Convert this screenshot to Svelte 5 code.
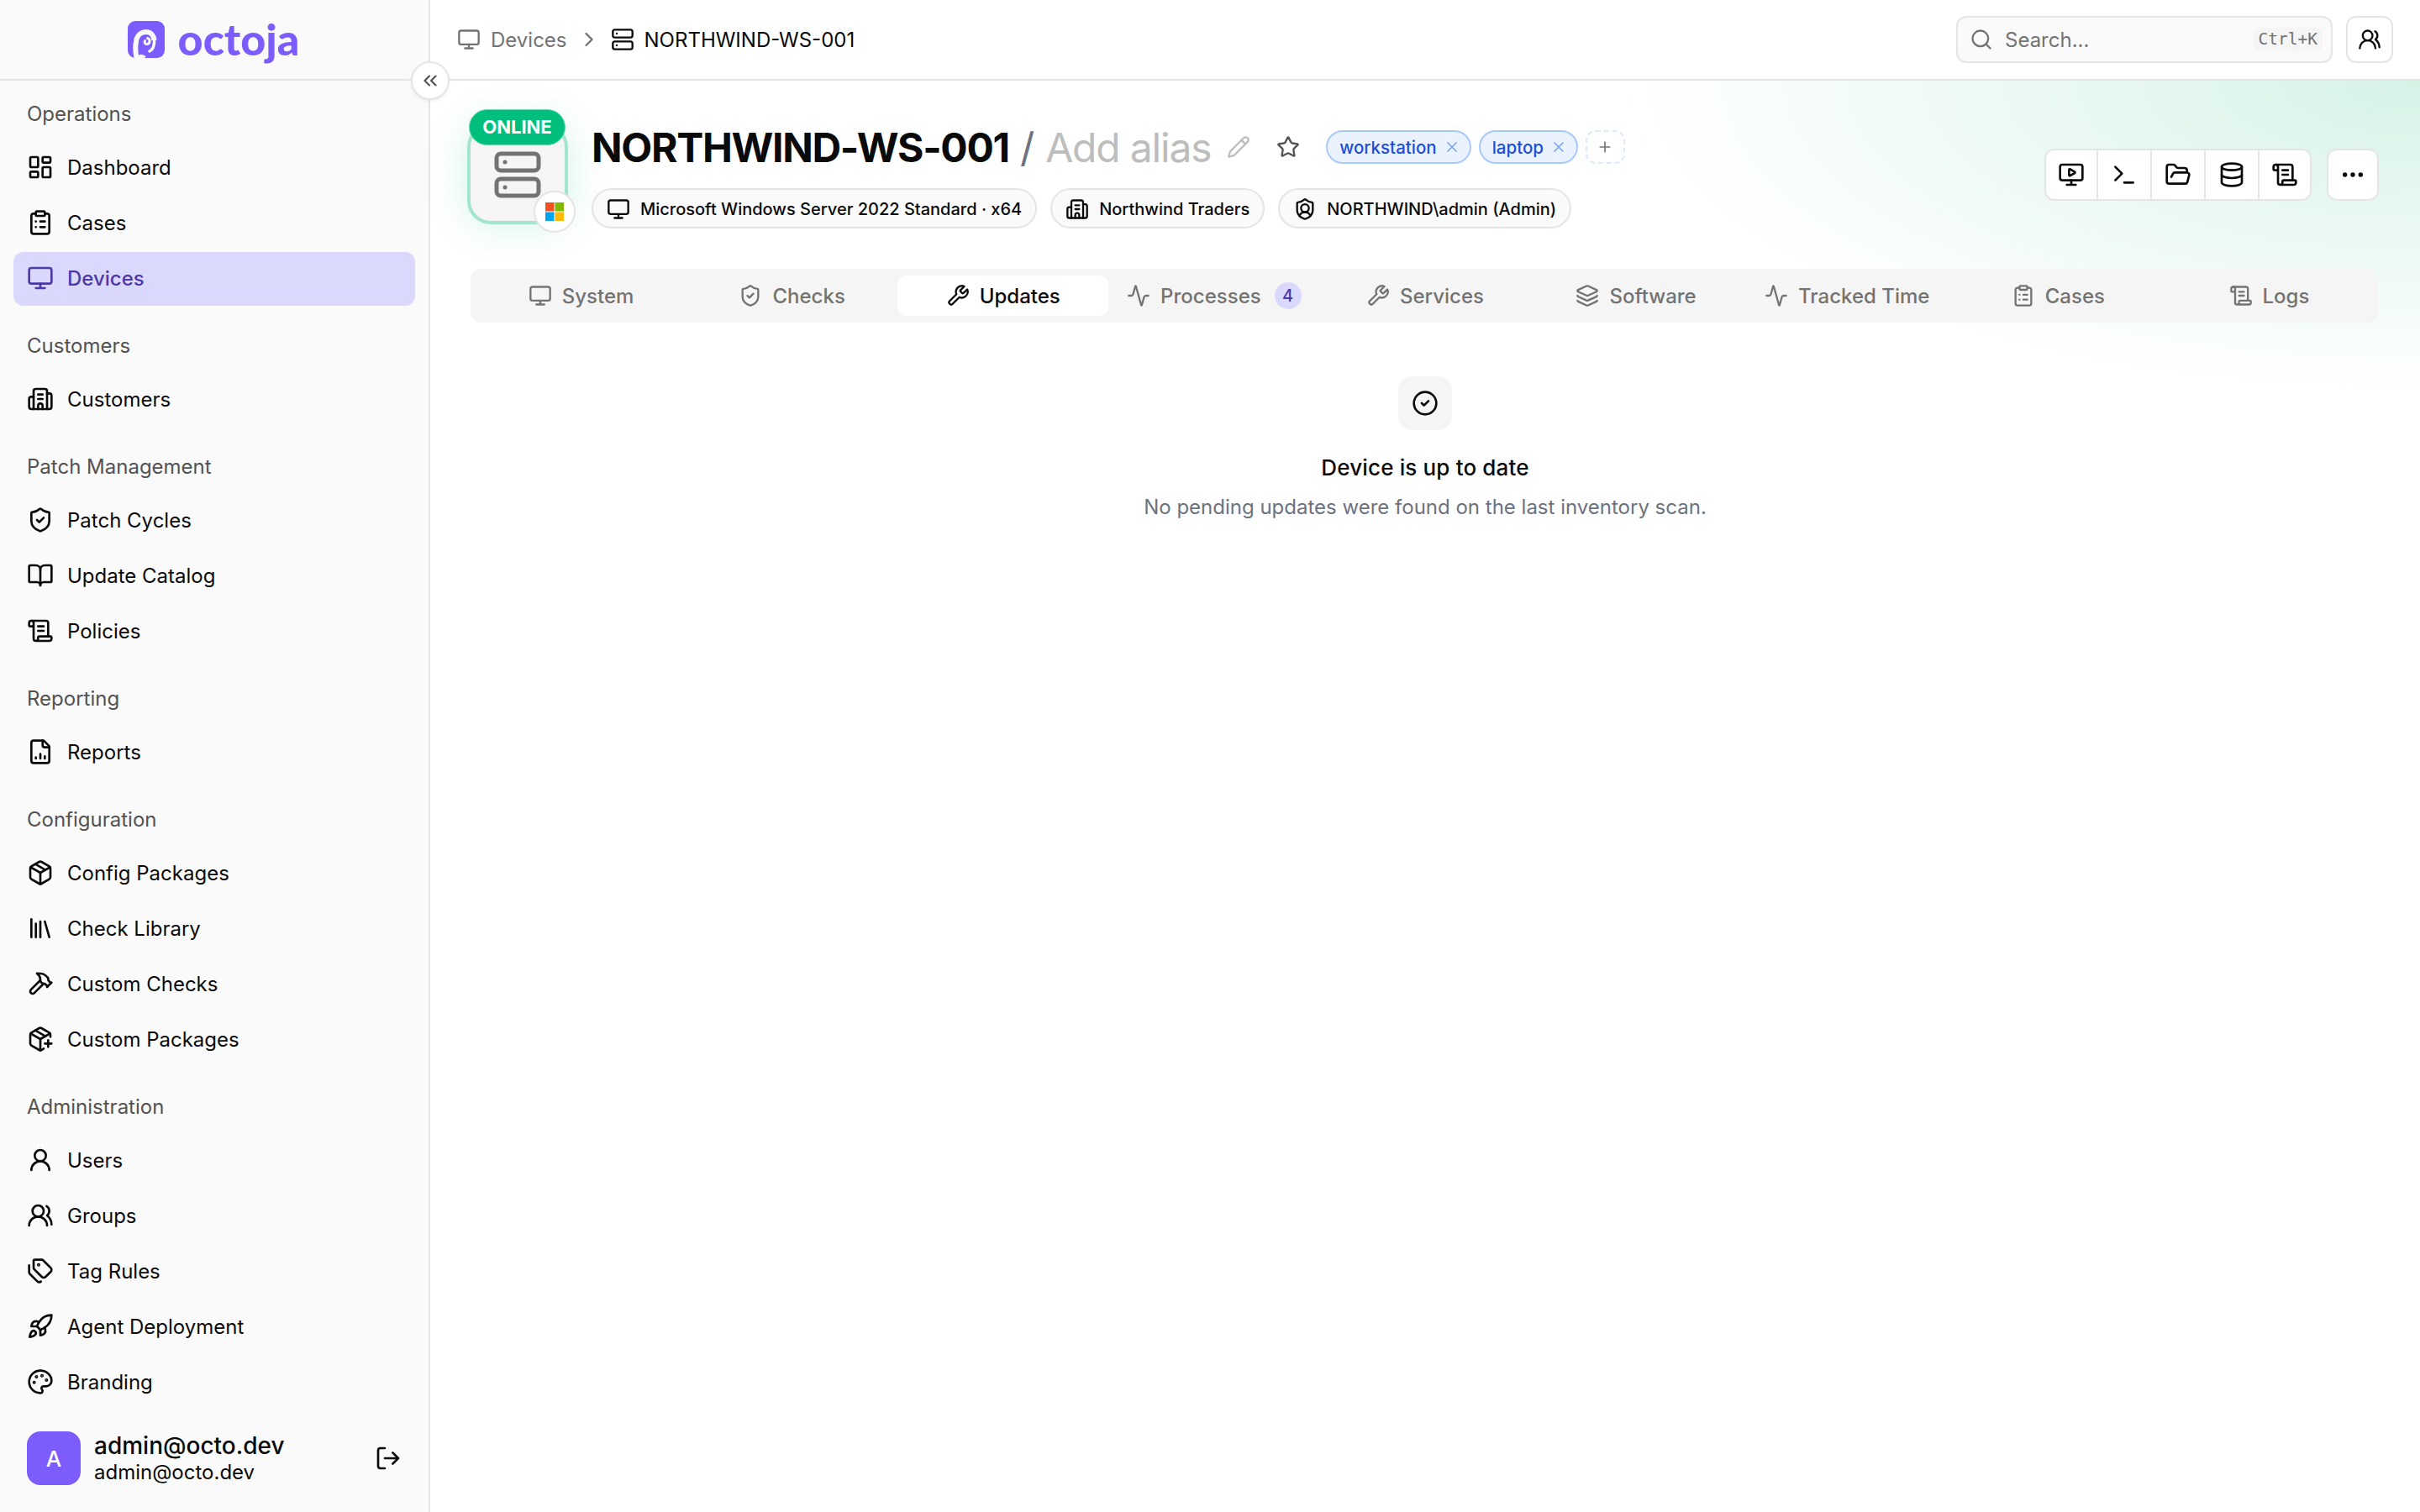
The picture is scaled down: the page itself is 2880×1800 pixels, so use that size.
<script>
  const icons = {
    dashboard: '<rect x="3" y="3" width="7" height="9" rx="1"/><rect x="14" y="3" width="7" height="5" rx="1"/><rect x="14" y="12" width="7" height="9" rx="1"/><rect x="3" y="16" width="7" height="5" rx="1"/>',
    clipboard: '<rect x="8" y="2" width="8" height="4" rx="1"/><path d="M16 4h2a2 2 0 0 1 2 2v14a2 2 0 0 1-2 2H6a2 2 0 0 1-2-2V6a2 2 0 0 1 2-2h2"/><path d="M12 11h4M12 16h4M8 11h.01M8 16h.01"/>',
    monitor: '<rect x="2" y="3" width="20" height="14" rx="2"/><path d="M8 21h8M12 17v4"/>',
    building: '<path d="M10 12h4M10 8h4M14 21v-3a2 2 0 0 0-4 0v3"/><path d="M6 10H4a2 2 0 0 0-2 2v7a2 2 0 0 0 2 2h16a2 2 0 0 0 2-2V9a2 2 0 0 0-2-2h-2"/><path d="M6 21V5a2 2 0 0 1 2-2h8a2 2 0 0 1 2 2v16"/>',
    shieldCheck: '<path d="M20 13c0 5-3.5 7.5-7.66 8.95a1 1 0 0 1-.67-.01C7.5 20.5 4 18 4 13V6a1 1 0 0 1 1-1c2 0 4.5-1.2 6.24-2.72a1.17 1.17 0 0 1 1.52 0C14.51 3.81 17 5 19 5a1 1 0 0 1 1 1z"/><path d="m9 12 2 2 4-4"/>',
    book: '<path d="M12 7v14"/><path d="M3 18a1 1 0 0 1-1-1V4a1 1 0 0 1 1-1h5a4 4 0 0 1 4 4 4 4 0 0 1 4-4h5a1 1 0 0 1 1 1v13a1 1 0 0 1-1 1h-6a3 3 0 0 0-3 3 3 3 0 0 0-3-3z"/>',
    scroll: '<path d="M15 12h-5M15 8h-5"/><path d="M19 17V5a2 2 0 0 0-2-2H4"/><path d="M8 21h12a2 2 0 0 0 2-2v-1a1 1 0 0 0-1-1H11a1 1 0 0 0-1 1v1a2 2 0 1 1-4 0V5a2 2 0 1 0-4 0v2a1 1 0 0 0 1 1h3"/>',
    fileChart: '<path d="M15 2H6a2 2 0 0 0-2 2v16a2 2 0 0 0 2 2h12a2 2 0 0 0 2-2V7Z"/><path d="M14 2v4a2 2 0 0 0 2 2h4"/><path d="M8 18v-1M12 18v-4M16 18v-2"/>',
    package: '<path d="M11 21.73a2 2 0 0 0 2 0l7-4A2 2 0 0 0 21 16V8a2 2 0 0 0-1-1.73l-7-4a2 2 0 0 0-2 0l-7 4A2 2 0 0 0 3 8v8a2 2 0 0 0 1 1.73z"/><path d="M12 22V12"/><path d="M3.29 7 12 12l8.71-5"/><path d="m7.5 4.27 9 5.15"/>',
    library: '<path d="m16 6 4 14M12 6v14M8 8v12M4 4v16"/>',
    hammer: '<path d="m15 12-8.373 8.373a1 1 0 1 1-3-3L12 9"/><path d="m18 15 4-4"/><path d="m21.5 11.5-1.914-1.914A2 2 0 0 1 19 8.172V7l-2.26-2.26a6 6 0 0 0-4.202-1.756L9 2.96l.92.82A6.18 6.18 0 0 1 12 8.4V10l2 2h1.172a2 2 0 0 1 1.414.586L18.5 14.5"/>',
    packagePlus: '<path d="M16 16h6M19 13v6"/><path d="M21 10V8a2 2 0 0 0-1-1.73l-7-4a2 2 0 0 0-2 0l-7 4A2 2 0 0 0 3 8v8a2 2 0 0 0 1 1.73l7 4a2 2 0 0 0 2 0l2-1.14"/><path d="m7.5 4.27 9 5.15"/><path d="M3.29 7 12 12l8.71-5"/><path d="M12 22V12"/>',
    user: '<circle cx="12" cy="8" r="5"/><path d="M20 21a8 8 0 0 0-16 0"/>',
    users: '<path d="M18 21a8 8 0 0 0-16 0"/><circle cx="10" cy="8" r="5"/><path d="M22 20c0-3.37-2-6.5-4-8a5 5 0 0 0-.45-8.3"/>',
    tags: '<path d="M13.172 2a2 2 0 0 1 1.414.586l6.71 6.71a2.4 2.4 0 0 1 0 3.408l-4.592 4.592a2.4 2.4 0 0 1-3.408 0l-6.71-6.71A2 2 0 0 1 6 9.172V3a1 1 0 0 1 1-1z"/><path d="M2 7v6.172a2 2 0 0 0 .586 1.414l6.71 6.71a2.4 2.4 0 0 0 3.191.193"/><circle cx="10.5" cy="6.5" r=".5" fill="currentColor"/>',
    rocket: '<path d="M4.5 16.5c-1.5 1.26-2 5-2 5s3.74-.5 5-2c.71-.84.7-2.13-.09-2.91a2.18 2.18 0 0 0-2.91-.09z"/><path d="m12 15-3-3a22 22 0 0 1 2-3.95A12.88 12.88 0 0 1 22 2c0 2.72-.78 7.5-6 11a22.35 22.35 0 0 1-4 2z"/><path d="M9 12H4s.55-3.03 2-4c1.62-1.08 5 0 5 0"/><path d="M12 15v5s3.03-.55 4-2c1.08-1.62 0-5 0-5"/>',
    palette: '<path d="M12 22a1 1 0 0 1 0-20 10 9 0 0 1 10 9 5 5 0 0 1-5 5h-2.25a1.75 1.75 0 0 0-1.4 2.8l.3.4a1.75 1.75 0 0 1-1.4 2.8z"/><circle cx="13.5" cy="6.5" r=".5" fill="currentColor"/><circle cx="17.5" cy="10.5" r=".5" fill="currentColor"/><circle cx="6.5" cy="12.5" r=".5" fill="currentColor"/><circle cx="8.5" cy="7.5" r=".5" fill="currentColor"/>',
    logout: '<path d="m16 17 5-5-5-5M21 12H9"/><path d="M9 21H5a2 2 0 0 1-2-2V5a2 2 0 0 1 2-2h4"/>',
    chevronsLeft: '<path d="m11 17-5-5 5-5M18 17l-5-5 5-5"/>',
    chevronRight: '<path d="m9 18 6-6-6-6"/>',
    server: '<rect x="2" y="2" width="20" height="8" rx="2"/><rect x="2" y="14" width="20" height="8" rx="2"/><path d="M6 6h.01M6 18h.01"/>',
    search: '<path d="m21 21-4.34-4.34"/><circle cx="11" cy="11" r="8"/>',
    pencil: '<path d="M21.174 6.812a1 1 0 0 0-3.986-3.987L3.842 16.174a2 2 0 0 0-.5.83l-1.321 4.352a.5.5 0 0 0 .623.622l4.353-1.32a2 2 0 0 0 .83-.497z"/><path d="m15 5 4 4"/>',
    star: '<path d="M11.525 2.295a.53.53 0 0 1 .95 0l2.31 4.679a2.123 2.123 0 0 0 1.595 1.16l5.166.756a.53.53 0 0 1 .294.904l-3.736 3.638a2.123 2.123 0 0 0-.611 1.878l.882 5.14a.53.53 0 0 1-.771.56l-4.618-2.428a2.122 2.122 0 0 0-1.973 0L6.396 21.01a.53.53 0 0 1-.77-.56l.881-5.139a2.122 2.122 0 0 0-.611-1.879L2.16 9.795a.53.53 0 0 1 .294-.906l5.165-.755a2.122 2.122 0 0 0 1.597-1.16z"/>',
    x: '<path d="M18 6 6 18M6 6l12 12"/>',
    plus: '<path d="M5 12h14M12 5v14"/>',
    shieldUser: '<path d="M20 13c0 5-3.5 7.5-7.66 8.95a1 1 0 0 1-.67-.01C7.5 20.5 4 18 4 13V6a1 1 0 0 1 1-1c2 0 4.5-1.2 6.24-2.72a1.17 1.17 0 0 1 1.52 0C14.51 3.81 17 5 19 5a1 1 0 0 1 1 1z"/><path d="M6.376 18.91a6 6 0 0 1 11.249.003"/><circle cx="12" cy="11" r="4"/>',
    monitorPlay: '<path d="M15.033 9.44a.647.647 0 0 1 0 1.12l-4.065 2.352a.645.645 0 0 1-.968-.56V7.648a.645.645 0 0 1 .967-.56z"/><path d="M12 17v4M8 21h8"/><rect x="2" y="3" width="20" height="14" rx="2"/>',
    terminal: '<path d="M12 19h8M4 17l6-6-6-6"/>',
    folder: '<path d="m6 14 1.5-2.9A2 2 0 0 1 9.24 10H20a2 2 0 0 1 1.94 2.5l-1.54 6a2 2 0 0 1-1.95 1.5H4a2 2 0 0 1-2-2V5a2 2 0 0 1 2-2h3.9a2 2 0 0 1 1.69.9l.81 1.2a2 2 0 0 0 1.67.9H18a2 2 0 0 1 2 2v2"/>',
    database: '<ellipse cx="12" cy="5" rx="9" ry="3"/><path d="M3 5v14a9 3 0 0 0 18 0V5"/><path d="M3 12a9 3 0 0 0 18 0"/>',
    ellipsis: '<circle cx="12" cy="12" r="1"/><circle cx="19" cy="12" r="1"/><circle cx="5" cy="12" r="1"/>',
    wrench: '<path d="M14.7 6.3a1 1 0 0 0 0 1.4l1.6 1.6a1 1 0 0 0 1.4 0l3.77-3.77a6 6 0 0 1-7.94 7.94l-6.91 6.91a2.12 2.12 0 0 1-3-3l6.91-6.91a6 6 0 0 1 7.94-7.94l-3.76 3.76z"/>',
    activity: '<path d="M22 12h-2.48a2 2 0 0 0-1.93 1.46l-2.35 8.36a.25.25 0 0 1-.48 0L9.24 2.18a.25.25 0 0 0-.48 0l-2.35 8.36A2 2 0 0 1 4.49 12H2"/>',
    layers: '<path d="M12.83 2.18a2 2 0 0 0-1.66 0L2.6 6.08a1 1 0 0 0 0 1.83l8.58 3.91a2 2 0 0 0 1.66 0l8.58-3.9a1 1 0 0 0 0-1.83z"/><path d="M2 12a1 1 0 0 0 .58.91l8.6 3.91a2 2 0 0 0 1.65 0l8.58-3.9A1 1 0 0 0 22 12"/><path d="M2 17a1 1 0 0 0 .58.91l8.6 3.91a2 2 0 0 0 1.65 0l8.58-3.9A1 1 0 0 0 22 17"/>',
    circleCheck: '<circle cx="12" cy="12" r="10"/><path d="m9 12 2 2 4-4"/>'
  }

  const sections = [
    { title: 'Operations', items: [['dashboard', 'Dashboard'], ['clipboard', 'Cases'], ['monitor', 'Devices', true]] },
    { title: 'Customers', items: [['building', 'Customers']] },
    { title: 'Patch Management', items: [['shieldCheck', 'Patch Cycles'], ['book', 'Update Catalog'], ['scroll', 'Policies']] },
    { title: 'Reporting', items: [['fileChart', 'Reports']] },
    { title: 'Configuration', items: [['package', 'Config Packages'], ['library', 'Check Library'], ['hammer', 'Custom Checks'], ['packagePlus', 'Custom Packages']] },
    { title: 'Administration', items: [['user', 'Users'], ['users', 'Groups'], ['tags', 'Tag Rules'], ['rocket', 'Agent Deployment'], ['palette', 'Branding']] }
  ]

  const tabs = [
    ['monitor', 'System'], ['shieldCheck', 'Checks'], ['wrench', 'Updates'], ['activity', 'Processes', 4], ['wrench', 'Services'],
    ['layers', 'Software'], ['activity', 'Tracked Time'], ['clipboard', 'Cases'], ['scroll', 'Logs']
  ]

  const actions = ['monitorPlay', 'terminal', 'folder', 'database', 'scroll']
  const chips = [
    ['monitor', 'Microsoft Windows Server 2022 Standard · x64'],
    ['building', 'Northwind Traders'],
    ['shieldUser', 'NORTHWIND\\admin (Admin)']
  ]
</script>

{#snippet icon(name, size = 32)}
  <svg class="icon" width={size} height={size} viewBox="0 0 24 24" fill="none" stroke="currentColor" stroke-width="2" stroke-linecap="round" stroke-linejoin="round">{@html icons[name]}</svg>
{/snippet}

<div class="app">
  <aside class="sidebar">
    <div class="brand">
      <svg class="mark" width="44" height="44" viewBox="0 0 44 44" fill="none" stroke="#fafafa" stroke-linecap="round">
        <rect width="44" height="44" rx="9" fill="#7c5cfc" stroke="none" />
        <path stroke-width="6" stroke-linecap="butt" d="M11 46C9 38 9 30 10 24C11 17 16 13 22 13C27 13 31 17 31.5 23" />
        <path stroke-width="3.5" d="M31.500 22C32 29 30 34 26 36" />
        <path stroke-width="3" d="M23.500 20.500C27 21.500 27 27 23 27.500C20.500 27.800 19.500 25 20.500 23.500" />
        <path stroke-width="5" stroke-linecap="butt" d="M12 45C14 42 17 41 20 44" />
      </svg>
      <span class="wordmark">octoja</span>
    </div>
    <nav>
      {#each sections as section}
        <div class="section">
          <div class="section-title">{section.title}</div>
          <div class="items">
            {#each section.items as [ic, label, active]}
              <div class="item" class:active>
                {@render icon(ic)}
                <span>{label}</span>
              </div>
            {/each}
          </div>
        </div>
      {/each}
    </nav>
    <div class="account">
      <div class="avatar">A</div>
      <div class="who">
        <div class="name">admin@octo.dev</div>
        <div class="mail">admin@octo.dev</div>
      </div>
      {@render icon('logout')}
    </div>
  </aside>

  <button class="collapse">{@render icon('chevronsLeft', 26)}</button>

  <div class="main">
    <header class="topbar">
      <div class="crumbs">
        <span class="crumb">{@render icon('monitor', 28)}Devices</span>
        <span class="sep">{@render icon('chevronRight', 28)}</span>
        <span class="crumb current">{@render icon('server', 28)}NORTHWIND-WS-001</span>
      </div>
      <div class="top-right">
        <div class="search">
          {@render icon('search', 28)}
          <span class="placeholder">Search...</span>
          <kbd>Ctrl+K</kbd>
        </div>
        <button class="user-btn">{@render icon('users', 28)}</button>
      </div>
    </header>

    <main class="content">
      <div class="head">
        <div class="device">
          <div class="device-box">{@render icon('server', 60)}</div>
          <div class="status">ONLINE</div>
          <div class="os">
            <svg width="22" height="22" viewBox="0 0 22 22">
              <rect width="10.500" height="10.500" fill="#f25022" />
              <rect x="11.500" width="10.500" height="10.500" fill="#7fba00" />
              <rect y="11.500" width="10.500" height="10.500" fill="#00a4ef" />
              <rect x="11.500" y="11.500" width="10.500" height="10.500" fill="#ffb900" />
            </svg>
          </div>
        </div>
        <div class="info">
          <div class="title-row">
            <h1>NORTHWIND-WS-001</h1>
            <span class="slash">/</span>
            <span class="alias">Add alias</span>
            <span class="pencil">{@render icon('pencil', 28)}</span>
            <span class="star">{@render icon('star', 28)}</span>
            <div class="tags">
              <span class="tag">workstation {@render icon('x', 20)}</span>
              <span class="tag">laptop {@render icon('x', 20)}</span>
              <span class="tag-add">{@render icon('plus', 20)}</span>
            </div>
          </div>
          <div class="chips">
            {#each chips as [ic, label]}
              <span class="chip">{@render icon(ic, 28)}{label}</span>
            {/each}
          </div>
        </div>
        <div class="actions">
          <div class="action-group">
            {#each actions as ic}
              <button>{@render icon(ic, 32)}</button>
            {/each}
          </div>
          <button class="more">{@render icon('ellipsis', 32)}</button>
        </div>
      </div>

      <div class="tabs">
        {#each tabs as [ic, label, count], i}
          <div class="tab" class:selected={i === 2}>
            {@render icon(ic, 28)}
            <span>{label}</span>
            {#if count}<span class="count">{count}</span>{/if}
          </div>
        {/each}
      </div>

      <div class="empty">
        <div class="empty-icon">{@render icon('circleCheck', 32)}</div>
        <div class="empty-title">Device is up to date</div>
        <div class="empty-text">No pending updates were found on the last inventory scan.</div>
      </div>
    </main>
  </div>
</div>

<style>
  :global(body) {
    margin: 0;
    background: #fff;
    font-family: Inter, 'Liberation Sans', sans-serif;
    color: #0a0a0a;
  }

  .app {
    position: relative;
    display: flex;
    width: 2880px;
    height: 1800px;
    overflow: hidden;
  }

  .icon {
    flex: none;
    display: block;
  }

  button {
    appearance: none;
    font: inherit;
    color: inherit;
    padding: 0;
    display: flex;
    align-items: center;
    justify-content: center;
    cursor: pointer;
  }

  .sidebar {
    flex: 0 0 512px;
    box-sizing: border-box;
    display: flex;
    flex-direction: column;
    background: #fafafa;
    border-right: 2px solid #e5e5e5;
  }

  .brand {
    height: 96px;
    box-sizing: border-box;
    border-bottom: 2px solid #e5e5e5;
    display: flex;
    align-items: center;
    justify-content: center;
    gap: 16px;
    padding-right: 2px;
  }

  .wordmark {
    font-family: Lato, sans-serif;
    font-weight: 900;
    font-size: 52px;
    line-height: 1;
    color: #7c5cfc;
    margin-top: -3px;
  }

  nav {
    flex: 1;
    padding: 24px 16px 0;
    display: flex;
    flex-direction: column;
    gap: 32px;
  }

  .section-title {
    height: 32px;
    line-height: 32px;
    margin: 0 16px 16px;
    font-size: 24px;
    color: #525252;
  }

  .items {
    display: flex;
    flex-direction: column;
    gap: 2px;
  }

  .item {
    height: 64px;
    box-sizing: border-box;
    display: flex;
    align-items: center;
    gap: 16px;
    padding: 0 16px 2px;
    border-radius: 12px;
    font-size: 24px;
  }

  .item.active {
    background: #dad9fd;
    color: #4c3aa8;
    font-weight: 500;
  }

  .account {
    height: 64px;
    margin: 0 0 32px;
    padding: 0 32px;
    display: flex;
    align-items: center;
    gap: 16px;
  }

  .avatar {
    width: 64px;
    height: 64px;
    border-radius: 16px;
    background: #7c5cfc;
    color: #fff;
    font-size: 26px;
    font-weight: 500;
    display: flex;
    align-items: center;
    justify-content: center;
  }

  .who {
    flex: 1;
  }

  .name {
    font-size: 28px;
    line-height: 34px;
    font-weight: 500;
  }

  .mail {
    font-size: 24px;
    line-height: 30px;
  }

  .collapse {
    position: absolute;
    left: 489px;
    top: 73px;
    width: 46px;
    height: 46px;
    border-radius: 50%;
    background: #fff;
    border: 2px solid #e5e5e5;
    color: #525252;
    box-shadow: 0 2px 4px rgba(0, 0, 0, 0.06);
  }

  .main {
    flex: 1;
    min-width: 0;
    display: flex;
    flex-direction: column;
  }

  .topbar {
    height: 96px;
    box-sizing: border-box;
    border-bottom: 2px solid #e5e5e5;
    display: flex;
    align-items: center;
    justify-content: space-between;
    padding: 0 32px;
  }

  .crumbs {
    display: flex;
    align-items: center;
    gap: 12px;
    font-size: 24px;
  }

  .crumb {
    display: flex;
    align-items: center;
    gap: 12px;
    color: #737373;
  }

  .crumb.current {
    color: #0a0a0a;
  }

  .sep {
    color: #737373;
  }

  .top-right {
    display: flex;
    gap: 16px;
  }

  .search {
    width: 448px;
    height: 56px;
    box-sizing: border-box;
    display: flex;
    align-items: center;
    gap: 14px;
    padding: 0 10px 0 14px;
    background: #fafafa;
    border: 2px solid #e5e5e5;
    border-radius: 12px;
    color: #737373;
  }

  .placeholder {
    flex: 1;
    font-size: 24px;
  }

  kbd {
    height: 28px;
    line-height: 28px;
    padding: 0 6px;
    background: #f5f5f5;
    border-radius: 6px;
    font-family: 'DejaVu Sans Mono', monospace;
    font-size: 19.5px;
  }

  .user-btn {
    width: 56px;
    height: 56px;
    background: #fff;
    border: 2px solid #e5e5e5;
    border-radius: 12px;
  }

  .content {
    flex: 1;
    padding: 0 50px 0 48px;
    background: radial-gradient(ellipse 960px 380px at 100% 0, #d6f2e7, rgba(214, 242, 231, 0) 100%) no-repeat;
  }

  .head {
    display: flex;
    align-items: center;
    height: 224px;
  }

  .device {
    position: relative;
    flex: none;
    width: 120px;
    height: 120px;
    margin: -2px 28px 0 -4px;
  }

  .device-box {
    box-sizing: border-box;
    width: 120px;
    height: 120px;
    background: #f5f5f5;
    border: 4px solid #a3e6cb;
    border-radius: 28px;
    color: #737373;
    display: flex;
    align-items: center;
    justify-content: center;
    box-shadow: 0 0 48px rgba(0, 191, 125, 0.18);
    padding-top: 2px;
  }

  .status {
    position: absolute;
    top: -17px;
    left: 2px;
    width: 115px;
    height: 43px;
    box-sizing: border-box;
    background: #00bf7d;
    border: 1px solid #6fd8b0;
    border-radius: 22px;
    color: #fff;
    font-size: 22px;
    font-weight: 700;
    line-height: 41px;
    text-align: center;
  }

  .os {
    position: absolute;
    right: -9px;
    bottom: -10px;
    box-sizing: border-box;
    width: 50px;
    height: 50px;
    border-radius: 50%;
    background: #fff;
    border: 2px solid #e5e5e5;
    display: flex;
    align-items: center;
    justify-content: center;
  }

  .info {
    flex: 1;
    display: flex;
    flex-direction: column;
    gap: 18px;
  }

  .title-row {
    display: flex;
    align-items: center;
    height: 62px;
  }

  h1 {
    margin: 0;
    font-size: 48px;
    font-weight: 700;
    letter-spacing: -1.3px;
  }

  .slash {
    margin: 0 13px;
    font-size: 48px;
    color: #6b7280;
  }

  .alias {
    font-size: 48px;
    letter-spacing: -1.2px;
    color: #bdbdbd;
  }

  .pencil {
    margin-left: 19px;
    color: #bdbdbd;
  }

  .star {
    margin-left: 31px;
    color: #525252;
  }

  .tags {
    margin-left: 31px;
    display: flex;
    gap: 9px;
  }

  .tag {
    height: 40px;
    box-sizing: border-box;
    display: flex;
    align-items: center;
    gap: 8px;
    padding: 0 11px 0 14px;
    background: #eaf2ff;
    border: 2px solid #a9c9fb;
    border-radius: 20px;
    color: #1d4ed8;
    font-size: 20.5px;
    font-weight: 500;
  }

  .tag .icon {
    color: #7ba2f0;
  }

  .tag-add {
    width: 47px;
    height: 40px;
    box-sizing: border-box;
    display: flex;
    align-items: center;
    justify-content: center;
    border: 2px dashed #dbeafe;
    border-radius: 12px;
    color: #737373;
  }

  .chips {
    display: flex;
    gap: 16px;
  }

  .chip {
    height: 48px;
    box-sizing: border-box;
    display: flex;
    align-items: center;
    gap: 12px;
    padding: 2px 16px 0;
    background: #fafafa;
    border: 2px solid #e5e5e5;
    border-radius: 24px;
    font-size: 20px;
    font-weight: 500;
  }

  .actions {
    display: flex;
    gap: 18px;
    margin-right: -1px;
  }

  .action-group {
    display: flex;
    background: #fff;
    border: 2px solid #e5e5e5;
    border-radius: 12px;
    overflow: hidden;
  }

  .action-group button {
    width: 64px;
    height: 58px;
    background: #fff;
    border: none;
    border-left: 2px solid #e5e5e5;
  }

  .action-group button:first-child {
    border-left: none;
    width: 60px;
  }

  .action-group button:last-child {
    width: 62px;
  }

  .more {
    width: 62px;
    height: 62px;
    background: #fff;
    border: 2px solid #e5e5e5;
    border-radius: 12px;
  }

  .tabs {
    height: 64px;
    box-sizing: border-box;
    padding: 8px 4px 8px 6px;
    background: #f5f5f5;
    border-radius: 12px;
    display: grid;
    grid-template-columns: repeat(9, 1fr);
  }

  .tab {
    display: flex;
    align-items: center;
    justify-content: center;
    gap: 12px;
    border-radius: 10px;
    color: #737373;
    font-size: 24px;
    font-weight: 500;
  }

  .tab.selected {
    background: #fff;
    color: #0a0a0a;
  }

  .count {
    width: 32px;
    height: 32px;
    margin-left: 4px;
    border-radius: 50%;
    background: #dad9fd;
    color: #4c3aa8;
    font-size: 20px;
    line-height: 32px;
    text-align: center;
  }

  .empty {
    margin: 64px -2px 0 0;
    display: flex;
    flex-direction: column;
    align-items: center;
  }

  .empty-icon {
    width: 64px;
    height: 64px;
    border-radius: 16px;
    background: #f5f5f5;
    display: flex;
    align-items: center;
    justify-content: center;
  }

  .empty-title {
    margin-top: 27px;
    font-size: 26px;
    letter-spacing: 0.15px;
    line-height: 36px;
    font-weight: 500;
  }

  .empty-text {
    margin-top: 11px;
    font-size: 24px;
    line-height: 36px;
    color: #6b7280;
  }
</style>
